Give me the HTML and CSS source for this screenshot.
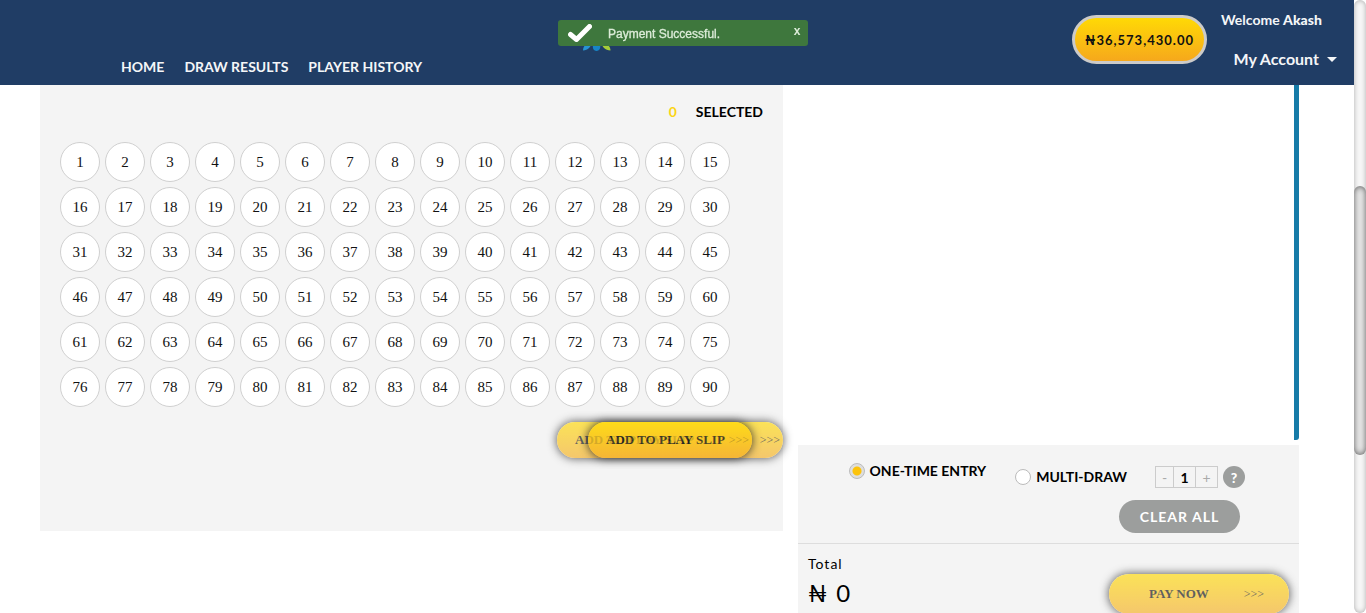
FILE: index.html
```
<!DOCTYPE html>
<html lang="en">
<head>
<meta charset="utf-8">
<title>Play Slip</title>
<link rel="stylesheet" href="styles.css">
</head>
<body>
<div class="viewport">
  <div class="page">
    <header class="header">
      <nav class="nav">
        <a href="#home">HOME</a>
        <a href="#results">DRAW RESULTS</a>
        <a href="#history">PLAYER HISTORY</a>
      </nav>
      <svg class="logo" viewBox="0 0 30 30" aria-hidden="true">
        <path d="M1 29.5C1 25 4 23 10 21C9 26 6 29 1 29.5Z" fill="#2795d3"/>
        <path d="M15 18C19 21 20 30 14.500 30C9 30 10 21 15 18Z" fill="#1785c7"/>
        <path d="M28.500 29.500C28.500 25 25 23 19 21C20 26 23 29 28.500 29.500Z" fill="#a5cd39"/>
      </svg>
      <button class="balance" type="button">₦36,573,430.00</button>
      <div class="account">
        <span class="welcome">Welcome <strong>Akash</strong></span>
        <button class="account-menu" type="button">My Account <span class="caret"></span></button>
      </div>
    </header>

    <main class="content">
      <section class="picker">
        <p class="selected"><span class="selected-count">0</span><span>SELECTED</span></p>
        <div class="numbers">
          <button>1</button><button>2</button><button>3</button><button>4</button><button>5</button><button>6</button><button>7</button><button>8</button><button>9</button><button>10</button><button>11</button><button>12</button><button>13</button><button>14</button><button>15</button>
          <button>16</button><button>17</button><button>18</button><button>19</button><button>20</button><button>21</button><button>22</button><button>23</button><button>24</button><button>25</button><button>26</button><button>27</button><button>28</button><button>29</button><button>30</button>
          <button>31</button><button>32</button><button>33</button><button>34</button><button>35</button><button>36</button><button>37</button><button>38</button><button>39</button><button>40</button><button>41</button><button>42</button><button>43</button><button>44</button><button>45</button>
          <button>46</button><button>47</button><button>48</button><button>49</button><button>50</button><button>51</button><button>52</button><button>53</button><button>54</button><button>55</button><button>56</button><button>57</button><button>58</button><button>59</button><button>60</button>
          <button>61</button><button>62</button><button>63</button><button>64</button><button>65</button><button>66</button><button>67</button><button>68</button><button>69</button><button>70</button><button>71</button><button>72</button><button>73</button><button>74</button><button>75</button>
          <button>76</button><button>77</button><button>78</button><button>79</button><button>80</button><button>81</button><button>82</button><button>83</button><button>84</button><button>85</button><button>86</button><button>87</button><button>88</button><button>89</button><button>90</button>
        </div>
        <div class="add-area">
          <button class="gold add-back" type="button"><span>ADD TO PLAY SLIP</span><span class="arrows">&gt;&gt;&gt;</span></button>
          <button class="gold add-front" type="button"><span>ADD TO PLAY SLIP</span><span class="arrows">&gt;&gt;&gt;</span></button>
        </div>
      </section>

      <aside class="side">
        <div class="slips"></div>
        <div class="summary">
          <div class="entry">
            <label class="choice once"><input type="radio" name="entry" checked><span>ONE-TIME ENTRY</span></label>
            <div class="multi">
              <label class="choice"><input type="radio" name="entry"><span>MULTI-DRAW</span></label>
              <div class="stepper">
                <button type="button">-</button><input type="text" value="1" aria-label="Draws"><button type="button">+</button>
              </div>
              <button class="help" type="button">?</button>
            </div>
          </div>
          <div class="clear-row"><button class="clear" type="button">CLEAR ALL</button></div>
          <div class="total-row">
            <div class="total"><span class="total-label">Total</span><span class="total-value"><span>₦</span><span>0</span></span></div>
            <button class="gold pay" type="button"><span>PAY NOW</span><span class="arrows">&gt;&gt;&gt;</span></button>
          </div>
        </div>
      </aside>
    </main>
  </div>
  <div class="scrollbar" aria-hidden="true"><div class="thumb"></div></div>
</div>

<div class="toast" role="status">
  <svg class="tick" viewBox="0 0 24 18" aria-hidden="true"><path d="M2.500 10.500L8.500 15.500L21.500 2.500" fill="none" stroke="#fff" stroke-width="5" stroke-linecap="round" stroke-linejoin="round"/></svg>
  <span class="toast-text">Payment Successful.</span>
  <button class="toast-close" type="button">x</button>
</div>
</body>
</html>
```
FILE: styles.css
```
* { box-sizing: border-box; }
body {
  margin: 0;
  background: #fff;
  color: #000;
  font-family: Lato, "Noto Sans", sans-serif;
  font-size: 14px;
}
button, input { font: inherit; color: inherit; margin: 0; padding: 0; }
button { border: 0; background: none; cursor: pointer; }

.viewport {
  display: grid;
  grid-template-columns: 1fr 12px;
  height: 100vh;
  overflow: hidden;
}
.page { min-height: 0; }

.header {
  display: flex;
  height: 85px;
  background: #203d65;
  color: #f4f6f8;
  padding: 0 17px 0 121px;
}
.nav { display: flex; gap: 20px; align-self: flex-end; padding-bottom: 10px; width: 461px; }
.nav a { color: inherit; text-decoration: none; font-weight: 700; line-height: 17px; white-space: nowrap; }
.logo { width: 30px; height: 30px; margin-top: 21px; }
.balance {
  width: 135px;
  height: 49px;
  margin: 15px 14px 0 auto;
  border: 3px solid #cccbc9;
  border-radius: 25px;
  background: linear-gradient(#ffd905, #f6a81c);
  color: #111;
  font-size: 13px;
  font-weight: 700;
  letter-spacing: 1px;
}
.account { display: flex; flex-direction: column; width: 116px; padding-top: 11px; gap: 19px; }
.welcome { line-height: 18px; font-weight: 700; white-space: nowrap; }
.welcome strong { font-weight: 900; }
.account-menu {
  display: flex;
  align-items: center;
  justify-content: flex-end;
  gap: 8px;
  font-size: 16px;
  font-weight: 700;
  line-height: 22px;
  white-space: nowrap;
}
.caret { border: 5px solid transparent; border-top-color: #f4f6f8; border-bottom: 0; }

.content {
  display: grid;
  grid-template-columns: 743fr 501fr;
  gap: 15px;
  align-items: start;
  padding: 0 55px 0 40px;
}
.picker { background: #f4f4f4; padding: 17px 0 73px 20px; }
.selected {
  display: flex;
  justify-content: flex-end;
  gap: 19px;
  margin: 0;
  padding: 0 20px 21px 0;
  line-height: 19px;
  font-weight: 700;
}
.selected-count { color: #fbd416; }
.numbers { display: grid; grid-template-columns: repeat(15, 40px); gap: 5px; }
.numbers button {
  height: 40px;
  border: 1px solid #d0d0d0;
  border-radius: 50%;
  background: #fff;
  color: #111;
  font-family: "Liberation Serif", serif;
  font-size: 15px;
}
.gold {
  border-radius: 20px;
  background: linear-gradient(#ffd905, #f6b024);
  box-shadow: 0 0 8px 1px #222;
  color: #111;
  font-family: "Liberation Serif", serif;
  font-size: 13px;
  font-weight: 700;
  white-space: nowrap;
}
.arrows { font-size: 12px; font-weight: 400; }
.add-area { display: grid; grid-template-columns: 226px; justify-content: end; padding-top: 15px; }
.add-area .gold {
  grid-area: 1 / 1;
  display: flex;
  align-items: center;
  justify-content: space-between;
  height: 36px;
}
.add-area .add-back { opacity: .65; padding: 0 3px 0 18px; }
.add-area .add-front { opacity: .75; width: 164px; margin-left: 31px; padding: 0 3px 0 18px; }
.add-front .arrows { opacity: .4; }

.side { display: flex; flex-direction: column; gap: 5px; }
.slips { height: 355px; border-right: 5px solid #167ba8; border-radius: 0 0 3px 0; }
.summary { background: #f4f4f4; }
.entry { display: flex; align-items: flex-start; justify-content: flex-end; gap: 29px; padding: 17px 54px 0 0; }
.choice { display: flex; align-items: center; gap: 5px; line-height: 18px; font-weight: 700; white-space: nowrap; }
.choice input {
  appearance: none;
  width: 16px;
  height: 16px;
  border: 1px solid #bbb;
  border-radius: 50%;
  background: #fff;
}
.choice input:checked { background: radial-gradient(circle, #fcc30b 0 4px, #dedede 5px); }
.multi { display: flex; align-items: center; padding-top: 4px; }
.stepper { display: flex; margin-left: 28px; border: 1px solid #ccc; height: 22px; width: 63px; }
.stepper button { flex: 1; color: #aaa; }
.stepper button:first-child { flex: 0 0 17px; }
.stepper input {
  width: 23px;
  border: solid #ccc;
  border-width: 0 1px;
  background: none;
  text-align: center;
  font-weight: 700;
}
.help {
  width: 22px;
  height: 22px;
  margin-left: 5px;
  border-radius: 50%;
  background: #9c9e9d;
  color: #fff;
  font-weight: 900;
}
.clear-row { display: flex; justify-content: flex-end; padding: 12px 59px 10px 0; }
.clear {
  width: 121px;
  height: 33px;
  border-radius: 17px;
  background: #9c9e9d;
  color: #fff;
  font-weight: 700;
  letter-spacing: 1px;
}
.total-row {
  display: flex;
  justify-content: space-between;
  align-items: flex-start;
  border-top: 1px solid #ddd;
  padding: 10px 10px 20px;
}
.total { display: flex; flex-direction: column; }
.total-label { line-height: 20px; letter-spacing: 1px; }
.total-value { display: flex; gap: 9px; font-size: 24px; line-height: 38px; }
.pay {
  display: flex;
  align-items: center;
  justify-content: space-between;
  width: 180px;
  height: 40px;
  margin-top: 20px;
  padding: 0 25px 0 40px;
  opacity: .65;
}

.scrollbar {
  display: flex;
  flex-direction: column;
  border-radius: 6px;
  background: #f7f7f7;
  box-shadow: inset 0 0 5px #aaa;
}
.scrollbar::before { content: ""; flex: 186; }
.scrollbar::after { content: ""; flex: 158; }
.thumb { flex: 269; border-radius: 6px; background: #e9e9e9; box-shadow: inset 0 0 6px #555; }

.toast {
  position: fixed;
  top: 20px;
  left: 50%;
  display: flex;
  width: 250px;
  height: 26px;
  margin-left: -125px;
  padding-left: 10px;
  border-radius: 3px;
  background: #3e773d;
  color: #dcecd8;
  font-family: "Liberation Sans", sans-serif;
}
.tick { width: 24px; height: 18px; margin-top: 4px; }
.toast-text { flex: 1; padding-left: 16px; font-size: 12px; line-height: 29px; -webkit-text-stroke: 0.3px; }
.toast-close { width: 22px; height: 22px; font-size: 12px; font-weight: 700; }
```
